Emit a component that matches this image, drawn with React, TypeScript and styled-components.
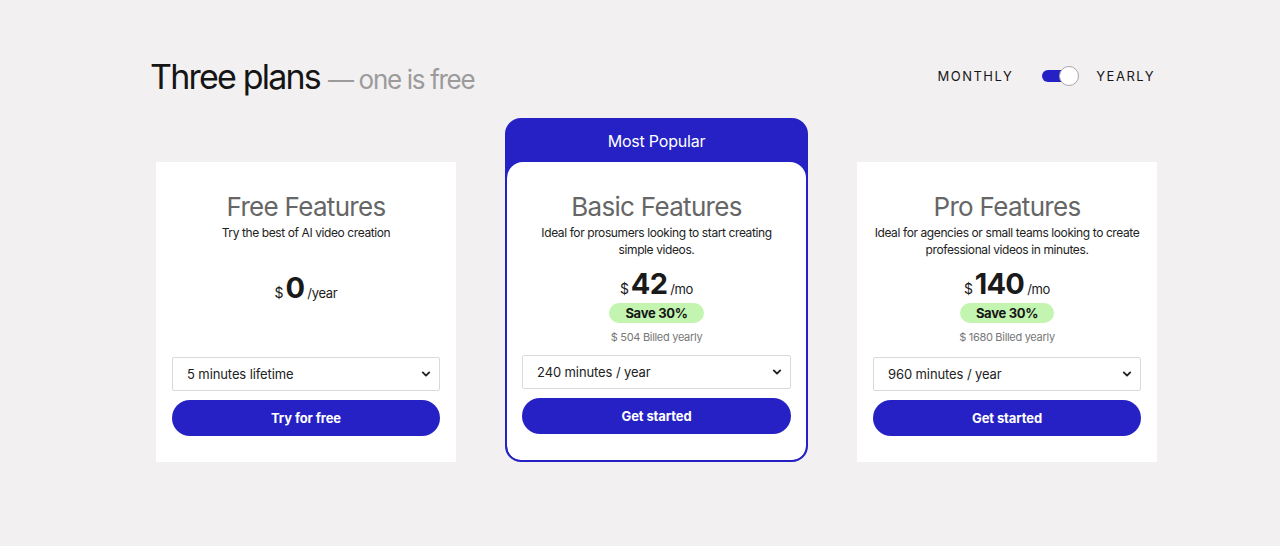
import React from "react";
import styled, { createGlobalStyle } from "styled-components";

const BLUE = "#2521c4";

const Global = createGlobalStyle`
  html, body { margin: 0; padding: 0; background: #f2f0f1; }
  body { font-family: Inter, "Noto Sans", "Liberation Sans", sans-serif; color: #1a1a1a; }
  * { box-sizing: border-box; }
`;

const Page = styled.div`
  width: 1007px;
  margin-left: 150px;
  padding-top: 54px;
`;

const Header = styled.div`
  display: flex;
  align-items: center;
  justify-content: space-between;
  height: 44px;
  padding-right: 2px;
`;

const Title = styled.h1`
  margin: 0;
  font-size: 34px;
  font-weight: 400;
  letter-spacing: -1.8px;
  color: #151515;
  display: flex;
  align-items: baseline;
`;

const Sub = styled.span`
  margin-left: 8px;
  font-size: 26px;
  letter-spacing: -1.3px;
  color: #9b9b9b;
`;

const Toggle = styled.div`
  display: flex;
  align-items: center;
`;

const ToggleLabel = styled.span`
  font-size: 13px;
  letter-spacing: 1.5px;
  color: #161616;
  font-weight: 400;
`;

const Switch = styled.div`
  position: relative;
  width: 37px;
  height: 20px;
  margin: 0 17px 0 29px;
`;

const Track = styled.div`
  position: absolute;
  left: 0;
  top: 4px;
  width: 30px;
  height: 12px;
  border-radius: 6px;
  background: ${BLUE};
`;

const Knob = styled.div`
  position: absolute;
  right: 0;
  top: 0;
  width: 20px;
  height: 20px;
  border-radius: 50%;
  background: #fff;
  border: 1px solid #a9a9a9;
`;

const Cards = styled.div`
  display: flex;
  align-items: flex-end;
  justify-content: space-between;
  margin: 20px 0 0 6px;
`;

const Featured = styled.div`
  width: 303px;
  border: 2px solid ${BLUE};
  border-radius: 16px;
  background: ${BLUE};
  display: flex;
  flex-direction: column;
  overflow: hidden;
`;

const Ribbon = styled.div`
  height: 42px;
  display: flex;
  align-items: center;
  justify-content: center;
  color: #fff;
  font-size: 16px;
  font-weight: 400;
  letter-spacing: -0.2px;
`;

const Card = styled.div<{ $featured?: boolean }>`
  width: ${(p) => (p.$featured ? "299px" : "300px")};
  height: ${(p) => (p.$featured ? "298px" : "300px")};
  background: #fff;
  border-radius: ${(p) => (p.$featured ? "16px 16px 14px 14px" : "0")};
  padding: 30px ${(p) => (p.$featured ? "15px" : "16px")} 26px;
  display: flex;
  flex-direction: column;
  align-items: center;
  text-align: center;
`;

const PlanName = styled.h2`
  margin: 0;
  font-size: 26px;
  line-height: 30px;
  font-weight: 400;
  color: #666;
  letter-spacing: -0.7px;
`;

const Desc = styled.p`
  margin: 2px 0 0;
  width: 266px;
  font-size: 12px;
  line-height: 17px;
  letter-spacing: -0.4px;
  color: #222;
  min-height: 34px;
`;

const PriceRow = styled.div<{ $low?: boolean }>`
  margin-top: ${(p) => (p.$low ? "14px" : "10px")};
  height: 32px;
  display: flex;
  align-items: baseline;
  justify-content: center;
  color: #1a1a1a;
`;

const Currency = styled.span`
  font-size: 14px;
  margin-right: 2px;
`;

const Amount = styled.span`
  font-size: 29px;
  font-weight: 700;
  letter-spacing: -0.8px;
  line-height: 32px;
`;

const Per = styled.span`
  font-size: 13px;
  margin-left: 3px;
  letter-spacing: -0.3px;
`;

const Badge = styled.div`
  margin-top: 3px;
  height: 20px;
  padding: 0 16px;
  border-radius: 10px;
  background: #c3f5b1;
  font-size: 13px;
  font-weight: 700;
  letter-spacing: -0.3px;
  color: #161616;
  display: flex;
  align-items: center;
`;

const Billed = styled.div`
  margin-top: 6px;
  font-size: 11px;
  line-height: 16px;
  letter-spacing: -0.3px;
  color: #777;
`;

const SelectWrap = styled.div`
  position: relative;
  width: 100%;
  margin-top: auto;
`;

const Select = styled.select`
  appearance: none;
  width: 100%;
  height: 34px;
  border: 1px solid #dadada;
  border-radius: 2px;
  background: #fff;
  padding: 0 30px 0 14px;
  font-family: inherit;
  font-size: 13px;
  letter-spacing: -0.1px;
  color: #222;
  outline: none;
`;

const Chevron = styled.svg`
  position: absolute;
  right: 9px;
  top: 50%;
  width: 10px;
  height: 10px;
  margin-top: -5px;
  pointer-events: none;
`;

const Button = styled.button`
  margin-top: 9px;
  width: 100%;
  height: 36px;
  border: none;
  border-radius: 18px;
  background: ${BLUE};
  color: #fff;
  font-family: inherit;
  font-size: 13px;
  font-weight: 700;
  letter-spacing: -0.1px;
  cursor: pointer;
`;

type Plan = {
  name: string;
  desc: string;
  amount: string;
  per: string;
  billed?: string;
  option: string;
  cta: string;
};

const plans: Plan[] = [
  {
    name: "Free Features",
    desc: "Try the best of AI video creation",
    amount: "0",
    per: "/year",
    option: "5 minutes lifetime",
    cta: "Try for free",
  },
  {
    name: "Basic Features",
    desc: "Ideal for prosumers looking to start creating simple videos.",
    amount: "42",
    per: "/mo",
    billed: "$ 504 Billed yearly",
    option: "240 minutes / year",
    cta: "Get started",
  },
  {
    name: "Pro Features",
    desc: "Ideal for agencies or small teams looking to create professional videos in minutes.",
    amount: "140",
    per: "/mo",
    billed: "$ 1680 Billed yearly",
    option: "960 minutes / year",
    cta: "Get started",
  },
];

function PlanBody({ plan, featured }: { plan: Plan; featured?: boolean }) {
  return (
    <Card $featured={featured}>
      <PlanName>{plan.name}</PlanName>
      <Desc>{plan.desc}</Desc>
      <PriceRow $low={!plan.billed}>
        <Currency>$</Currency>
        <Amount>{plan.amount}</Amount>
        <Per>{plan.per}</Per>
      </PriceRow>
      {plan.billed && (
        <>
          <Badge>Save 30%</Badge>
          <Billed>{plan.billed}</Billed>
        </>
      )}
      <SelectWrap>
        <Select defaultValue={plan.option}>
          <option>{plan.option}</option>
        </Select>
        <Chevron viewBox="0 0 10 10">
          <path d="M1.8 3.4 L5 6.6 L8.2 3.4" fill="none" stroke="#222" strokeWidth="1.9" strokeLinecap="round" strokeLinejoin="round" />
        </Chevron>
      </SelectWrap>
      <Button>{plan.cta}</Button>
    </Card>
  );
}

export default function App() {
  return (
    <>
      <Global />
      <Page>
        <Header>
          <Title>
            Three plans<Sub>— one is free</Sub>
          </Title>
          <Toggle>
            <ToggleLabel>MONTHLY</ToggleLabel>
            <Switch>
              <Track />
              <Knob />
            </Switch>
            <ToggleLabel>YEARLY</ToggleLabel>
          </Toggle>
        </Header>
        <Cards>
          <PlanBody plan={plans[0]} />
          <Featured>
            <Ribbon>Most Popular</Ribbon>
            <PlanBody plan={plans[1]} featured />
          </Featured>
          <PlanBody plan={plans[2]} />
        </Cards>
      </Page>
    </>
  );
}
